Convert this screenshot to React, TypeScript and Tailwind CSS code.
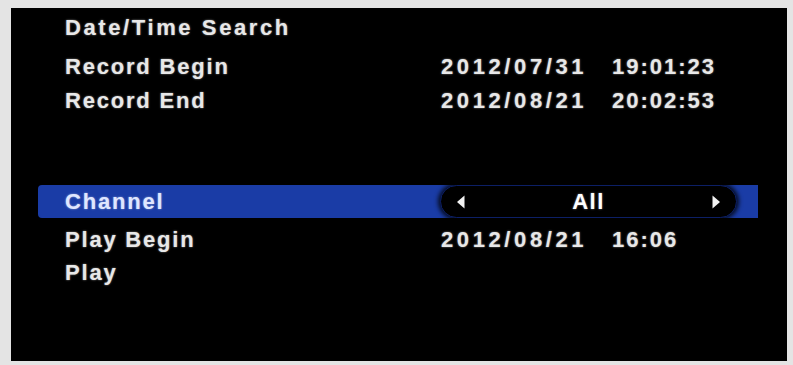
import React from "react";

const font = { fontFamily: '"Liberation Sans", Arial, sans-serif' };

function Row({
  label,
  date,
  time,
  className = "",
}: {
  label: string;
  date?: string;
  time?: string;
  className?: string;
}) {
  return (
    <div className={`flex h-[34px] items-center ${className}`}>
      <span className="w-[430px] shrink-0 pl-[54px] tracking-[1.8px]">{label}</span>
      {date && (
        <span className="flex">
          <span className="w-[171px] tracking-[3.6px]">{date}</span>
          <span className="tracking-[2px]">{time}</span>
        </span>
      )}
    </div>
  );
}

export default function App() {
  return (
    <div
      className="h-[365px] w-[793px] overflow-hidden bg-[#e4e4e4] pl-[11px] pt-[8px]"
      style={font}
    >
      {/* OSD panel */}
      <div className="flex h-[353px] w-[776px] flex-col bg-black pt-[2px] text-[22px] font-bold text-[#e8e8e8] [text-shadow:0_0_2px_rgba(255,255,255,0.55)]">
        <div className="flex h-[34px] items-center pl-[54px] tracking-[2.6px]">
          Date/Time Search
        </div>
        <Row
          label="Record Begin"
          date="2012/07/31"
          time="19:01:23"
          className="mt-[5px]"
        />
        <Row label="Record End" date="2012/08/21" time="20:02:53" />

        {/* selected row */}
        <div className="ml-[27px] mt-[68px] flex h-[33px] w-[720px] items-center rounded-l-[4px] bg-[#1a3ca6] text-[#dfe6ff]">
          <span className="w-[402px] shrink-0 pl-[27px] tracking-[1.8px]">Channel</span>
          <div className="flex h-[33px] w-[297px] items-center justify-between rounded-full border border-[#0c1f66] bg-black px-[15px] text-white shadow-[0_0_4px_2px_rgba(0,0,0,0.8)]">
            <svg width="10" height="14" viewBox="0 0 10 14">
              <path d="M8.5 0.5 L1 7 L8.5 13.5 Z" fill="#f2f2f2" />
            </svg>
            <span className="tracking-[1.5px]">All</span>
            <svg width="10" height="14" viewBox="0 0 10 14">
              <path d="M1.5 0.5 L9 7 L1.5 13.5 Z" fill="#f2f2f2" />
            </svg>
          </div>
        </div>

        <Row
          label="Play Begin"
          date="2012/08/21"
          time="16:06"
          className="mt-[4px]"
        />
        <Row label="Play" className="-mt-[1px]" />
      </div>
    </div>
  );
}
